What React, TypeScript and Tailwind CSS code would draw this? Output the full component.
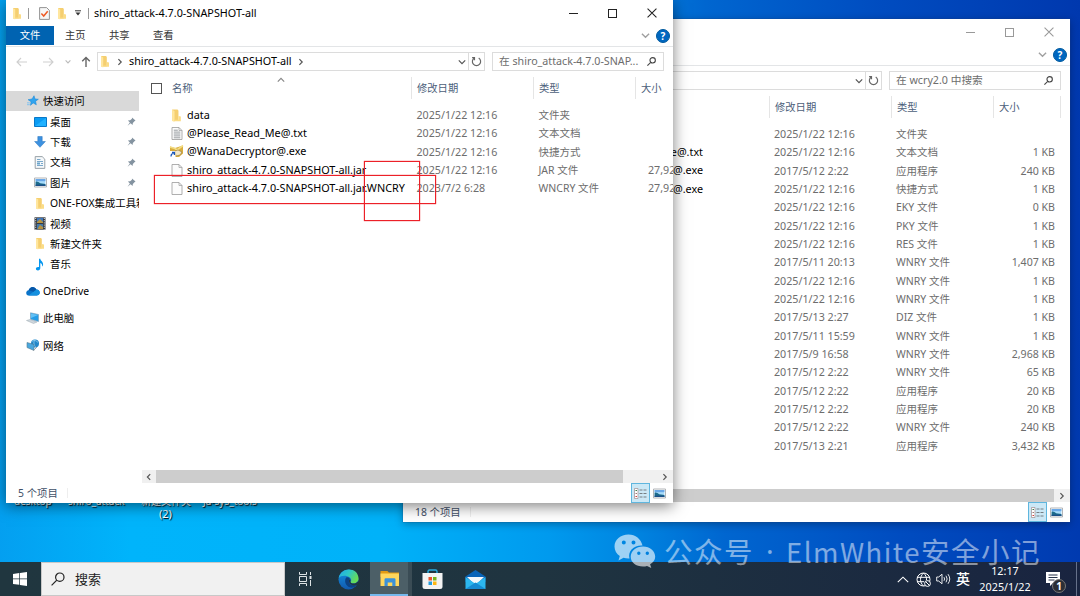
import React from 'react';

interface FileRow {
  name: string;
  icon?: 'folder' | 'text' | 'exe' | 'blank';
  date: string;
  type: string;
  size?: string;
}

const FRONT_FILES: FileRow[] = [
  { name: 'data', icon: 'folder', date: '2025/1/22 12:16', type: '文件夹' },
  { name: '@Please_Read_Me@.txt', icon: 'text', date: '2025/1/22 12:16', type: '文本文档' },
  { name: '@WanaDecryptor@.exe', icon: 'exe', date: '2025/1/22 12:16', type: '快捷方式' },
  { name: 'shiro_attack-4.7.0-SNAPSHOT-all.jar', icon: 'blank', date: '2025/1/22 12:16', type: 'JAR 文件', size: '27,92' },
  { name: 'shiro_attack-4.7.0-SNAPSHOT-all.jar.WNCRY', icon: 'blank', date: '2023/7/2 6:28', type: 'WNCRY 文件', size: '27,92' },
];

const BACK_FILES: FileRow[] = [
  { name: '', date: '2025/1/22 12:16', type: '文件夹' },
  { name: 'e@.txt', date: '2025/1/22 12:16', type: '文本文档', size: '1 KB' },
  { name: '@.exe', date: '2017/5/12 2:22', type: '应用程序', size: '240 KB' },
  { name: '@.exe', date: '2025/1/22 12:16', type: '快捷方式', size: '1 KB' },
  { name: '', date: '2025/1/22 12:16', type: 'EKY 文件', size: '0 KB' },
  { name: '', date: '2025/1/22 12:16', type: 'PKY 文件', size: '1 KB' },
  { name: '', date: '2025/1/22 12:16', type: 'RES 文件', size: '1 KB' },
  { name: '', date: '2017/5/11 20:13', type: 'WNRY 文件', size: '1,407 KB' },
  { name: '', date: '2025/1/22 12:16', type: 'WNRY 文件', size: '1 KB' },
  { name: '', date: '2025/1/22 12:16', type: 'WNRY 文件', size: '1 KB' },
  { name: '', date: '2017/5/13 2:27', type: 'DIZ 文件', size: '1 KB' },
  { name: '', date: '2017/5/11 15:59', type: 'WNRY 文件', size: '1 KB' },
  { name: '', date: '2017/5/9 16:58', type: 'WNRY 文件', size: '2,968 KB' },
  { name: '', date: '2017/5/12 2:22', type: 'WNRY 文件', size: '65 KB' },
  { name: '', date: '2017/5/12 2:22', type: '应用程序', size: '20 KB' },
  { name: '', date: '2017/5/12 2:22', type: '应用程序', size: '20 KB' },
  { name: '', date: '2017/5/12 2:22', type: 'WNRY 文件', size: '240 KB' },
  { name: '', date: '2017/5/13 2:21', type: '应用程序', size: '3,432 KB' },
];

const FolderIcon = ({ className = 'h-3 w-3' }: { className?: string }) => (
  <svg viewBox="0 0 12 12" className={className}>
    <path d="M2 .5h5l.8 1V11H2z" fill="#f5cf70" />
    <path d="M2 .5 4.2 2v10L2 11z" fill="#ffe69e" />
    <path d="M7.8 6.5 10 7v4.2H4.2V10h3.6z" fill="#fbdc86" />
  </svg>
);

const FileIcon = ({ kind }: { kind: FileRow['icon'] }) => {
  if (kind === 'folder') return <FolderIcon className="h-[13px] w-[13px]" />;
  if (kind === 'exe') {
    return (
      <svg viewBox="0 0 15 13" className="h-[13px] w-[15px]">
        <path d="M1 1.500 6 3 14 .5v8L10 12H5L1 8z" fill="#d9ad3e" />
        <path d="M1 2 6 3.5 8 5 14 .5" fill="none" stroke="#f3dd85" strokeWidth="1.6" />
        <path d="m6 6 3-1 4 2-2 3-4 1z" fill="#f2e7c8" stroke="#80682c" strokeWidth=".5" />
        <path d="M.5 6h6v6.5h-6z" fill="#fff" />
        <path d="M2 11.5c0-2 .8-3 2.6-3M3 7.3h2.4v2.6" fill="none" stroke="#1b58b8" strokeWidth="1.2" />
      </svg>
    );
  }
  return (
    <svg viewBox="0 0 12 13" className="h-[13px] w-3">
      <path d="M1 .5h7l3 3v9H1z" fill="#fcfcfc" stroke="#9b9b9b" strokeWidth=".8" />
      <path d="M8 .5v3h3" fill="none" stroke="#9b9b9b" strokeWidth=".7" />
      {kind === 'text' && (
        <path d="M2.8 3.2h4M2.8 5.1h6.5M2.8 7h6.5M2.8 8.9h6.5M2.8 10.8h6.5" stroke="#8d9296" strokeWidth=".9" />
      )}
    </svg>
  );
};

const PictureIcon = () => (
  <svg viewBox="0 0 13 11" className="h-[11px] w-[13px]">
    <path d="M.5 1h12v9H.5z" fill="#fff" stroke="#a9adb0" strokeWidth=".9" />
    <path d="M1.6 2h9.8v7H1.6z" fill="#a9dcfa" />
    <path d="M1.6 2h9.8v2.2H1.6z" fill="#6aa8e8" />
    <path d="M1.6 4.7c2-.6 3 .7 4.5 1.5l5.3.7V9H1.6z" fill="#1d6b8c" />
    <path d="M1.6 7.7h9.8V9H1.6z" fill="#1c4f88" />
  </svg>
);

const PinIcon = () => (
  <svg viewBox="0 0 10 10" className="h-[9px] w-[9px]">
    <path d="M5.5.5 9.5 4l-1.2.6-1.8 2L6.2 9 4 6.9.6 9.6l2.6-3.4L1 4l2.5-.3 2-1.7z" fill="#8493a0" />
  </svg>
);

const NavIcon = ({ name }: { name: string }) => {
  switch (name) {
    case 'star':
      return (
        <svg viewBox="0 0 13 13" className="h-3 w-3">
          <path d="m7.6.8 1.1 3.5 3.6.3-3 2.1.8 3.9-3.4-2-2.9 2.6.6-4L1.2 5.1l4.3-.8z" fill="#30a4ef" stroke="#1b86d5" strokeWidth=".6" />
          <path d="M0 8.5h3M0 10.5h3" stroke="#72bdf0" strokeWidth=".9" />
        </svg>
      );
    case 'desktop':
      return (
        <svg viewBox="0 0 13 10" className="h-2.5 w-[13px]">
          <path d="M.5.5h12v9H.5z" fill="#0b9cf4" stroke="#0878c8" />
          <path d="M1 9 12 1v8z" fill="#20b1ff" />
        </svg>
      );
    case 'download':
      return (
        <svg viewBox="0 0 12 12" className="h-3 w-3">
          <path d="M3.8.5h4.4v5h3.2L6 11.3.6 5.5h3.2z" fill="#3c91e0" stroke="#2672bd" strokeWidth=".5" />
        </svg>
      );
    case 'document':
      return (
        <svg viewBox="0 0 12 13" className="h-[13px] w-3">
          <path d="M1.2.6h7l2.6 2.6v9.2H1.2z" fill="#f5f8fa" stroke="#8f989f" strokeWidth=".9" />
          <path d="M3 3.500h3.500M3 5.500h6M7 7.500h2M3 9.500h6" stroke="#5a93bf" strokeWidth=".8" />
          <path d="M3 6.5h3v2H3z" fill="#69a4cc" />
        </svg>
      );
    case 'picture':
      return <PictureIcon />;
    case 'video':
      return (
        <svg viewBox="0 0 12 13" className="h-[13px] w-3">
          <path d="M.5.3h11v12.4H.5z" fill="#353b43" />
          <path d="M3 1h6v5H3z" fill="#3d77bd" />
          <path d="M3 7h6v5H3z" fill="#457aaa" />
          <path d="m3 5 3-3 3 3v1H3zM4 11l2-3 3 2v2H4z" fill="#b69340" />
          <path d="M1.7 1v11.5M10.3 1v11.5" stroke="#e5e5e5" strokeDasharray="1 1.2" />
        </svg>
      );
    case 'music':
      return (
        <svg viewBox="0 0 12 13" className="h-[13px] w-3">
          <path d="M5 .7h1.3c.2 2.2 3 2.7 2.8 5.8-.1 1-.6 1.6-1.1 2 .3-2.2-.4-3.1-1.7-3.5v5c0 1.7-1 2.4-2.4 2.4-1.2 0-2-.6-2-1.6C1.9 9.3 3.3 8.6 5 9z" fill="#0797ef" />
        </svg>
      );
    case 'onedrive':
      return (
        <svg viewBox="0 0 14 10" className="h-2.5 w-3.5">
          <path d="M2.4 9.5C-.6 9.2-.5 4.7 2.600 4.300 3.700.4 8.500-.5 10.400 3.500c4.400.2 4.400 5.900.3 6z" fill="#0a73c9" />
          <path d="M2.400 9.500 10.400 3.600c4.400.1 4.400 5.800.3 5.900z" fill="#1490df" />
          <path d="M2.600 4.300C3.700.4 8.500-.5 10.400 3.500L7.300 5.700z" fill="#0757a8" />
        </svg>
      );
    case 'pc':
      return (
        <svg viewBox="0 0 14 12" className="h-3 w-3.5">
          <path d="m4.500.8 8 1.700v7L4.500 7.200z" fill="#259de7" stroke="#7fa4bd" strokeWidth=".7" />
          <path d="m5 1.500 7 1.500L5 6z" fill="#63c1f5" />
          <path d="m.5 8.500 3.500-1 7 2.500-3.500 1.500z" fill="#cfd7de" stroke="#9da8b0" strokeWidth=".5" />
        </svg>
      );
    case 'network':
      return (
        <svg viewBox="0 0 14 13" className="h-[13px] w-3.5">
          <circle cx="9" cy="4.500" r="4" fill="#2387c8" />
          <path d="M6 2.500c2-2 4-1 6 1M9 .5c-2 3-1 6 1 8" fill="none" stroke="#8cccee" strokeWidth=".9" />
          <path d="m1 3.500 7 2v6l-7-3z" fill="#4aa8de" stroke="#54788f" strokeWidth=".6" />
          <path d="m7 12 4-4" stroke="#98a4ac" />
        </svg>
      );
    default:
      return <FolderIcon className="h-[13px] w-3" />;
  }
};

const Chevron = ({ d, className, stroke = '#555' }: { d: string; className: string; stroke?: string }) => (
  <svg viewBox="0 0 10 10" className={className} fill="none" stroke={stroke} strokeWidth="1.5">
    <path d={d} />
  </svg>
);

const Magnifier = ({ className, strokeWidth = 1.2 }: { className: string; strokeWidth?: number }) => (
  <svg viewBox="0 0 14 14" className={className} fill="none" stroke="currentColor" strokeWidth={strokeWidth}>
    <circle cx="8.8" cy="5.2" r="4.2" />
    <path d="M5.800 8.200.6 13.400" />
  </svg>
);

interface WindowProps {
  active?: boolean;
  title?: string;
  search: string;
  status: string;
  children: React.ReactNode;
}

const ExplorerWindow: React.FC<WindowProps> = ({ active, title, search, status, children }) => (
  <div className="flex h-full w-full flex-col overflow-hidden bg-white">
    <div className="flex h-[26px] shrink-0 items-center">
      {title && (
        <div className="flex items-center pl-[5px]">
          <FolderIcon className="h-[13px] w-3" />
          <span className="ml-[5px] h-[11px] w-px bg-[#999]" />
          <svg viewBox="0 0 11 13" className="ml-[10px] h-[13px] w-[11px]">
            <path d="M.6.6h7l2.800 2.800v9H.6z" fill="#f7f7f7" stroke="#888" strokeWidth=".9" />
            <path d="m2.400 6.500 2.300 2.500 4-4.800" fill="none" stroke="#ee5a25" strokeWidth="1.500" />
          </svg>
          <FolderIcon className="ml-[6px] h-[13px] w-3" />
          <svg viewBox="0 0 6 6" className="ml-[7px] h-[6px] w-[6px]">
            <path d="M0 .8h6" stroke="#333" />
            <path d="M.5 2.500h5L3 5.500z" fill="#333" />
          </svg>
          <span className="ml-[7px] h-[11px] w-px bg-[#999]" />
          <span className="ml-[5px] whitespace-nowrap text-[10.800px] text-black">{title}</span>
        </div>
      )}
      <div className={`ml-auto flex items-center gap-[30px] pr-[16px] ${active ? 'text-[#222]' : 'text-[#999]'}`}>
        <span className="h-px w-[9px] bg-current" />
        <span className="h-[9px] w-[9px] border border-current" />
        <svg viewBox="0 0 9 9" className="h-[10px] w-[10px]" stroke="currentColor" strokeWidth=".95">
          <path d="m.5.500 8 8M8.500.500l-8 8" />
        </svg>
      </div>
    </div>
    <div className="flex h-[21px] shrink-0 border-b border-[#e3e5e7] text-[10.300px] text-[#333]">
      {active && (
        <div className="flex h-[19px] items-center">
          <span className="flex h-full w-[48px] items-center justify-center bg-[#0063b1] text-white">文件</span>
          <span className="w-[44px] pl-[11px]">主页</span>
          <span className="w-[44px] pl-[11px]">共享</span>
          <span className="w-[44px] pl-[11px]">查看</span>
        </div>
      )}
      <div className="ml-auto flex h-[19px] items-center gap-[6px] pr-[3px]">
        <Chevron d="m1 3 4 4 4-4" className="h-[9px] w-[9px]" stroke="#a0a0a0" />
        <span className="flex h-[14px] w-[14px] items-center justify-center rounded-full border border-[#005a9e] bg-[#0067c0] text-[10px] font-bold leading-none text-white">?</span>
      </div>
    </div>
    <div className="flex h-[29px] shrink-0 items-center pr-[9px]">
      <div className="flex w-[91px] items-center">
        <svg viewBox="0 0 12 10" className="ml-[10px] h-2.5 w-3" fill="none" stroke="#cfcfcf" strokeWidth="1.100">
          <path d="M11 5H1m4-4L1 5l4 4" />
        </svg>
        <svg viewBox="0 0 12 10" className="ml-[14px] h-2.5 w-3" fill="none" stroke="#cfcfcf" strokeWidth="1.100">
          <path d="M1 5h10M7 1l4 4-4 4" />
        </svg>
        <Chevron d="m2 3 3 3 3-3" className="ml-[10px] h-2 w-2" stroke="#bbb" />
        <svg viewBox="0 0 10 12" className="ml-[9px] h-3 w-2.5" fill="none" stroke="#666" strokeWidth="1.400">
          <path d="M5 11V1.500M1.200 5.200 5 1.400l3.800 3.800" />
        </svg>
      </div>
      <div className="flex h-[19px] w-[388px] items-center border border-[#dcdcdc] text-[10.800px] text-black">
        <FolderIcon className="ml-px h-[13px] w-3" />
        <Chevron d="m3 1.500 3.500 3.500L3 8.500" className="ml-[5px] h-2 w-2" />
        <span className="ml-[5px] whitespace-nowrap">{title}</span>
        <Chevron d="m3 1.500 3.500 3.500L3 8.500" className="ml-[5px] h-2 w-2" />
        <Chevron d="m1 3 4 4 4-4" className="ml-auto mr-[2px] h-2 w-2" />
        <span className="h-full w-px bg-[#dcdcdc]" />
        <svg viewBox="0 0 12 12" className="mx-[2px] h-[11px] w-[11px]" fill="none" stroke="#666" strokeWidth="1.300">
          <path d="M8.400 2.200A4.500 4.500 0 1 1 3.600 2.200M3.800 4.500V1.800H1.200" />
        </svg>
      </div>
      <div className="ml-auto flex h-[19px] w-[172px] items-center justify-between border border-[#dcdcdc] pl-[6px] pr-[7px] text-[10.700px] text-[#6d6d6d]">
        <span className="whitespace-nowrap">{search}</span>
        <Magnifier className="h-[9px] w-[9px] text-[#444]" strokeWidth={1.7} />
      </div>
    </div>
    <div className="flex min-h-0 flex-1">{children}</div>
    <div className="flex h-5 shrink-0 items-center text-[10.400px] text-[#3f5068]">
      <span className="pl-3">{status}</span>
      <span className="ml-[9px] h-2.5 w-px bg-[#eee]" />
      <div className="ml-auto flex h-full items-center pr-[7px]">
        <span className="flex h-[19.500px] w-[19px] items-center justify-center border border-[#5fb6de] bg-[#cbe8f6]">
          <svg viewBox="0 0 13 11" className="h-[11px] w-[13px]">
            <path d="M.5.500h3.500v10H.5z" fill="#fff" stroke="#a28c8c" strokeWidth=".7" />
            <path d="M1.500 2.500h1.500" stroke="#3b7c4b" />
            <path d="M1.500 5.500h1.500" stroke="#977" />
            <path d="M1.500 8.500h1.500" stroke="#d43b3b" />
            <path d="M5.500 2h3M9.500 2h3M5.500 5.500h3M9.500 5.500h3M5.500 9h3M9.500 9h3" stroke="#777e83" />
          </svg>
        </span>
        <span className="ml-[3px]">
          <PictureIcon />
        </span>
      </div>
    </div>
  </div>
);

const HeaderCell = ({ label, className }: { label: string; className: string }) => (
  <div className={`flex h-[22px] shrink-0 items-center border-l border-[#e5e5e5] pl-[5px] ${className}`}>{label}</div>
);

const ScrollBar = ({ thumb }: { thumb: string }) => (
  <div className="flex h-[13px] shrink-0 items-center bg-[#f0f0f0]">
    <span className="flex w-[14px] justify-center">
      <Chevron d="M6.500 1.500 3 5l3.500 3.500" className="h-2 w-2" />
    </span>
    <span className={`h-full bg-[#cdcdcd] ${thumb}`} />
    <span className="ml-auto flex w-[16px] justify-center">
      <Chevron d="M3 1.500 6.500 5 3 8.500" className="h-2 w-2" />
    </span>
  </div>
);

const NavItem = ({ icon, label, child, pinned }: { icon: string; label: string; child?: boolean; pinned?: boolean }) => (
  <div className={`flex h-[20.400px] shrink-0 items-center ${child ? 'pl-[27px]' : 'pl-[20px]'}`}>
    <span className="flex w-[14px] shrink-0 justify-center">
      <NavIcon name={icon} />
    </span>
    <span className="ml-[3px] overflow-hidden whitespace-nowrap leading-4">{label}</span>
    {pinned && (
      <span className="ml-auto pr-[3px]">
        <PinIcon />
      </span>
    )}
  </div>
);

const FrontWindow = () => (
  <ExplorerWindow
    active
    title="shiro_attack-4.7.0-SNAPSHOT-all"
    search="在 shiro_attack-4.7.0-SNAP..."
    status="5 个项目"
  >
    <nav className="flex w-[133px] shrink-0 flex-col pt-[15px] text-[10.400px] text-black">
      <div className="bg-[#d9d9d9]">
        <NavItem icon="star" label="快速访问" />
      </div>
      <NavItem icon="desktop" label="桌面" child pinned />
      <NavItem icon="download" label="下载" child pinned />
      <NavItem icon="document" label="文档" child pinned />
      <NavItem icon="picture" label="图片" child pinned />
      <NavItem icon="folder" label="ONE-FOX集成工具箱" child />
      <NavItem icon="video" label="视频" child />
      <NavItem icon="folder" label="新建文件夹" child />
      <NavItem icon="music" label="音乐" child />
      <div className="mt-[6.500px] flex flex-col gap-[6.800px]">
        <NavItem icon="onedrive" label="OneDrive" />
        <NavItem icon="pc" label="此电脑" />
        <NavItem icon="network" label="网络" />
      </div>
    </nav>
    <div className="ml-[3px] flex min-w-0 flex-1 flex-col">
      <div className="relative flex h-[30px] shrink-0 items-start pt-px text-[10.300px] text-[#4c607a]">
        <div className="flex h-[22px] w-[269px] shrink-0 items-center">
          <span className="ml-[9px] h-[11px] w-[11px] border border-[#555]" />
          <span className="ml-[10px]">名称</span>
        </div>
        <Chevron d="m1 7 4-4 4 4" className="absolute left-[135px] top-0 h-2 w-2" stroke="#888" />
        <HeaderCell label="修改日期" className="w-[122px]" />
        <HeaderCell label="类型" className="w-[102px]" />
        <HeaderCell label="大小" className="w-[80px]" />
      </div>
      <div className="flex min-h-0 flex-1 flex-col overflow-hidden whitespace-nowrap">
        {FRONT_FILES.map((file) => (
          <div key={file.name} className="flex h-[18.350px] shrink-0 items-center text-[10.500px] text-[#6d6d6d]">
            <div className="flex w-[274.500px] shrink-0 items-center pl-[27px] text-[10.830px] text-black">
              <span className="flex w-[15px] shrink-0 justify-center">
                <FileIcon kind={file.icon} />
              </span>
              <span className="ml-[3px]">{file.name}</span>
            </div>
            <span className="w-[122px] shrink-0 text-[10.700px]">{file.date}</span>
            <span className="w-[109.500px] shrink-0">{file.type}</span>
            <span className="text-[10.700px]">{file.size}</span>
          </div>
        ))}
      </div>
      <ScrollBar thumb="w-[467px]" />
    </div>
  </ExplorerWindow>
);

const BackWindow = () => (
  <ExplorerWindow search="在 wcry2.0 中搜索" status="18 个项目">
    <div className="flex min-w-0 flex-1 flex-col">
      <div className="flex h-[30px] shrink-0 items-start justify-end pr-[9px] pt-px text-[10.300px] text-[#4c607a]">
        <HeaderCell label="修改日期" className="w-[122px]" />
        <HeaderCell label="类型" className="w-[102px]" />
        <HeaderCell label="大小" className="w-[68px] border-r" />
      </div>
      <div className="flex min-h-0 flex-1 flex-col whitespace-nowrap">
        {BACK_FILES.map((file, i) => (
          <div key={i} className="flex h-[18.350px] shrink-0 items-center pr-[15px] text-[10.500px] text-[#6d6d6d]">
            <span className="w-[300px] text-right text-[10.800px] text-black">{file.name}</span>
            <span className="ml-[71px] w-[122px] shrink-0 text-[10.700px]">{file.date}</span>
            <span className="shrink-0">{file.type}</span>
            <span className="ml-auto text-[10.600px]">{file.size}</span>
          </div>
        ))}
      </div>
      <ScrollBar thumb="w-[637px]" />
    </div>
  </ExplorerWindow>
);

const Taskbar = () => (
  <div className="flex h-[34px] w-full items-center bg-gradient-to-r from-[#20363f] via-[#1f3440] to-[#192440] text-white">
    <div className="flex w-[41px] justify-center pr-px">
      <svg viewBox="0 0 14 14" className="h-3.5 w-[14px]" fill="#fff">
        <path d="m0 2 6.300-.9v5.500H0zM7 1l7-1v6.600H7zM0 7.300h6.300v5.500L0 12zM7 7.300h7V14l-7-1z" />
      </svg>
    </div>
    <div className="flex h-full w-[244px] items-center border border-[#c8c8c8] bg-[#f1f1f1] pl-[9px] text-[#222]">
      <Magnifier className="h-[14px] w-[14px]" strokeWidth={1.2} />
      <span className="ml-[10px] text-[13px]">搜索</span>
    </div>
    <div className="flex w-[42px] justify-center pr-[2px]">
      <svg viewBox="0 0 15 14" className="h-[14px] w-[15px]" fill="none" stroke="#dde3e5">
        <path d="M1.500 0v2.500h7V0M1.500 14v-2.500h7V14M1.500 4.500h7v5h-7zM12.500 0v3M12.500 8v6" />
        <path d="M12.500 4v3" strokeWidth="2" />
      </svg>
    </div>
    <div className="flex w-[43px] justify-center">
      <svg viewBox="0 0 22 22" className="h-[21px] w-[21px]">
        <defs>
          <linearGradient id="edgeTop" x1="0" y1="0" x2="1" y2=".5">
            <stop offset="0" stopColor="#22a7e8" />
            <stop offset=".5" stopColor="#2dc7c7" />
            <stop offset="1" stopColor="#68dc55" />
          </linearGradient>
          <linearGradient id="edgeBase" x1="0" y1="0" x2="0" y2="1">
            <stop offset="0" stopColor="#1293e2" />
            <stop offset="1" stopColor="#1259ad" />
          </linearGradient>
        </defs>
        <circle cx="11" cy="11" r="10.500" fill="url(#edgeBase)" />
        <path d="M.8 9.500C2.300-2.600 21.500-2.800 21.500 10c0 3-2.200 5-5 5-2 0-3.500-.8-3.500-1.500 1.200-1 1.200-3-.5-4.500C9 6.300 3 6.500.8 9.500z" fill="url(#edgeTop)" />
        <path d="M8.500 9c-3 5 1 11 6.500 10.500 2-.2 4-1.500 5-3-5 2-9-1-8.500-4.500 0-1 .5-1.500 1-2-.6-1-2.500-1.800-4-1z" fill="#0c4284" />
        <path d="M13 13.500c1.200 2.500 6 2 7.800-.5l.8 1c-.3 1-.8 2-1.300 2.500-4 2-8.800-.5-8.800-4 0-1 .5-1.800 1-2 .8 1 .8 2 .5 3z" fill="#203642" />
      </svg>
    </div>
    <div className="flex h-full w-[38px] flex-col items-center justify-between border-b-2 border-[#76b9ed] bg-[#4c5f67] pl-[2px] pt-[8px]">
      <svg viewBox="0 0 20 17" className="h-[17px] w-5">
        <path d="M.5 1h7l1.500 1.500h10V7H.5z" fill="#e39b13" />
        <path d="M.5 3.500h18.500V16H.5z" fill="#ffd65c" />
        <path d="M4.500 16V9.500q0-1.300 1.300-1.300h8.400q1.300 0 1.300 1.300V16h-3.200v-3.500H7.700V16z" fill="#3b91d9" />
      </svg>
    </div>
    <div className="h-full w-[4px] bg-[#3a4c55]" />
    <div className="flex w-[41px] justify-center">
      <svg viewBox="0 0 21 21" className="h-[21px] w-[21px]">
        <path d="M6 5V2.500Q6 1 7.500 1h6Q15 1 15 2.500V5" fill="none" stroke="#28ace0" strokeWidth="1.400" />
        <path d="M.5 4h20v13.500q0 2.500-2.500 2.500H3Q.5 20 .5 17.500z" fill="#f3f3f3" />
        <path d="M6.500 8H10v3.500H6.500z" fill="#e9532c" />
        <path d="M11 8h3.500v3.500H11z" fill="#75b51c" />
        <path d="M6.500 12.500H10V16H6.500z" fill="#229dde" />
        <path d="M11 12.500h3.500V16H11z" fill="#fdb713" />
      </svg>
    </div>
    <div className="flex w-[45px] justify-center">
      <svg viewBox="0 0 21 19" className="h-[19px] w-[21px]">
        <path d="M.5 6.500 10.500 0l10 6.500V12H.5z" fill="#0864b8" />
        <path d="M2 7h17l-6 6H8z" fill="#f3f8fb" />
        <path d="M.5 7v12h20V7l-8 5.500q-2 1-4 0z" fill="#2cb6ee" />
        <path d="M.5 19 10.500 12.500 20.500 19z" fill="#178bd3" />
      </svg>
    </div>
    <div className="ml-auto flex h-full items-center">
      <svg viewBox="0 0 12 7" className="h-[7px] w-3" fill="none" stroke="#fff" strokeWidth="1.100">
        <path d="m.8 6.200 5.200-5 5.200 5" />
      </svg>
      <svg viewBox="0 0 15 15" className="ml-[7px] h-[15px] w-[15px]" fill="none" stroke="#fff">
        <circle cx="7.500" cy="7.500" r="6.500" />
        <path d="M1 5.300h13M1 9.700h7M7.500 1C3.500 5 3.500 10 7.500 14M7.500 1c2.500 2.200 3.200 4.500 3 7" />
        <circle cx="11.500" cy="11.500" r="2.900" fill="#1b2a40" />
        <path d="m9.700 9.700 3.700 3.700" />
      </svg>
      <svg viewBox="0 0 15 12" className="ml-[5px] h-3 w-[15px]" fill="none" stroke="#fff" strokeWidth=".9">
        <path d="M.7 4h2L6 1.200v9.600L2.700 8h-2z" />
        <path d="M8 4.200q1.200 1.800 0 3.600M10 2.700q2.300 3.300 0 6.600M12 1.200q3.500 4.800 0 9.600" />
      </svg>
      <span className="ml-[5px] text-[14px] font-medium">英</span>
      <div className="ml-[9px] flex w-[52px] flex-col items-center pb-px text-[10.800px] leading-[15.500px]">
        <span>12:17</span>
        <span className="whitespace-nowrap">2025/1/22</span>
      </div>
      <div className="relative ml-[15px] mr-[16px] h-[15px] w-[14px]">
        <svg viewBox="0 0 14 15" className="h-[15px] w-[14px]">
          <path d="M0 0h14v11H7l-3 3v-3H0z" fill="#fff" />
          <path d="M2.500 3h9M2.500 5.500h9M2.500 8h6" stroke="#26334a" />
        </svg>
        <span className="absolute left-[6px] top-[7px] flex h-[14px] w-[14px] items-center justify-center rounded-full border border-[#777] bg-[#2b2e35] text-[10px] font-bold leading-none">1</span>
      </div>
      <span className="mr-[3px] h-full w-px bg-[#66718a]" />
    </div>
  </div>
);

const Watermark = () => (
  <div className="flex items-center whitespace-nowrap text-white/50">
    <svg viewBox="0 0 42 34" className="h-[34px] w-[42px]" fill="#fff" fillOpacity=".62" fillRule="evenodd">
      <path d="M14.500.5C6.500.5.500 5.800.500 12.500c0 4 2 7.300 5.300 9.500L4.500 26.500l5-2.700c1.800.6 4 .8 6 .7C13.500 17 20 11 28.500 11.500 27 5 21.500.5 14.500.5zM9.800 6.600a2 2 0 1 1 0 4 2 2 0 0 1 0-4zm9.700 0a2 2 0 1 1 0 4 2 2 0 0 1 0-4z" />
      <path d="M29 12.500c-7 0-12.300 4.600-12.300 10.200S22 32.500 29 32.500c1.500 0 2.800-.2 4-.6l4.300 2.100-1.200-3.700c3.200-1.900 5.100-4.500 5.100-7.600 0-5.600-5.200-10.200-12.200-10.200zm-4.200 5a1.700 1.700 0 1 1 0 3.400 1.700 1.700 0 0 1 0-3.400zm8.500 0a1.700 1.700 0 1 1 0 3.400 1.700 1.700 0 0 1 0-3.400z" />
    </svg>
    <div className="ml-2 flex font-['Noto_Sans_CJK_SC',sans-serif] text-[28.500px] tracking-[1.500px] leading-[34px]">
      <span className="w-[91px]">公众号</span>
      <span className="w-[31px] text-center font-['Noto_Sans',sans-serif]">·</span>
      <span className="text-[27.500px]">ElmWhite</span>
      <span>安全小记</span>
    </div>
  </div>
);

export default function App() {
  return (
    <div className="relative flex h-[596px] w-[1080px] flex-col justify-end overflow-hidden bg-[linear-gradient(88deg,#049ff0_0%,#00b4fb_12%,#00b2f9_35%,#009aee_50%,#0084e0_58%,#0066d0_66%,#004cc0_82%,#0038ae_100%)] font-['Noto_Sans','Noto_Sans_CJK_SC',sans-serif] leading-none">
      {/* desktop icon captions peeking out under the windows */}
      <div className="absolute left-[14px] top-[496px] flex text-[10px] text-white [text-shadow:1px_1px_1px_#000]">
        <span className="w-[54px]">desktop</span>
        <span className="w-[73px]">shiro_attack</span>
        <span className="w-[62px]">新建文件夹</span>
        <span>Ja-sys_tools</span>
      </div>
      <span className="absolute left-[159px] top-[508px] text-[11px] text-white [text-shadow:1px_1px_1px_#000]">(2)</span>

      <div className="absolute left-[403px] top-[19px] h-[503px] w-[667px] shadow-[0_0_1px_#24457f,0_2px_8px_rgba(0,0,0,0.3)]">
        <BackWindow />
      </div>
      <div className="absolute left-[6px] top-0 h-[503px] w-[667px] shadow-[0_3px_14px_rgba(0,0,0,0.5)]">
        <FrontWindow />
      </div>

      <div className="absolute left-[154px] top-[175px] h-[29px] w-[282px] border border-[#ec2028] shadow-[0_0_1px_#ec2028]" />
      <div className="absolute left-[364px] top-[161px] h-[60px] w-[56px] border border-[#ec2028] shadow-[0_0_1px_#ec2028]" />

      <Taskbar />
      <div className="absolute left-[614px] top-[534px]">
        <Watermark />
      </div>
    </div>
  );
}
